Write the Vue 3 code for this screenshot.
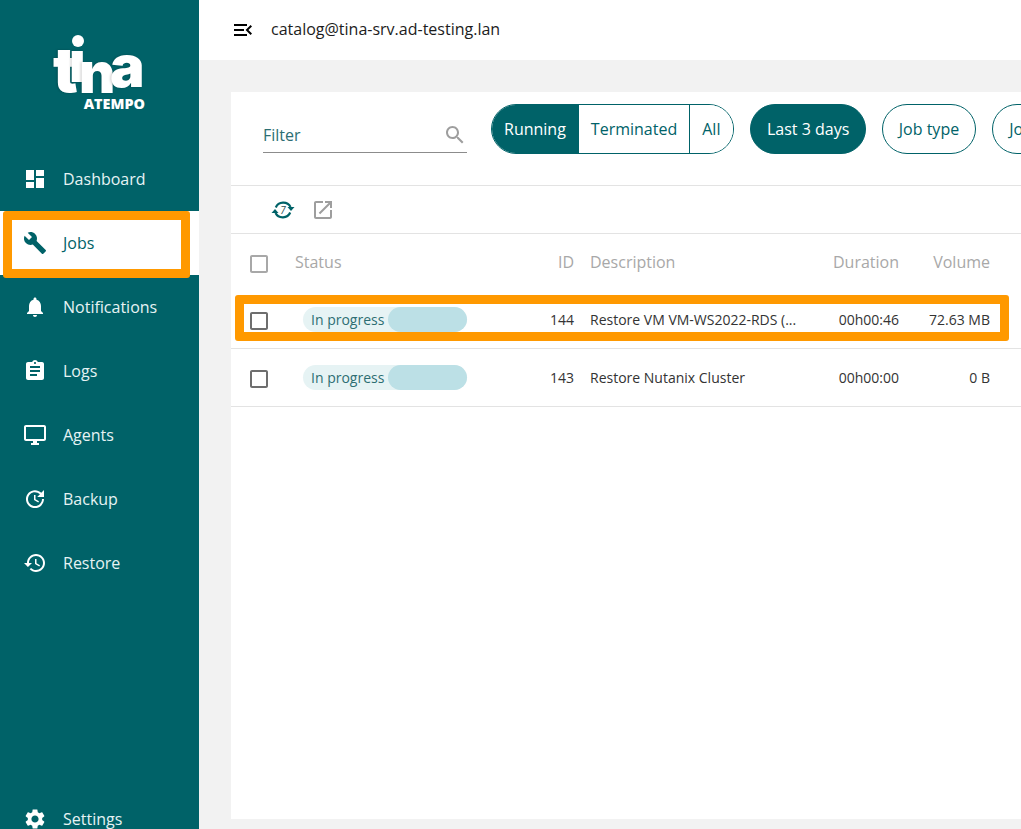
<template>
  <div class="page">
    <aside class="sidebar">
      <div class="logo">
        <svg width="110" height="85" viewBox="0 0 110 85">
          <text class="logo-letter" x="8" y="62" font-size="62">t</text>
          <circle cx="33" cy="11" r="6" fill="#fff" />
          <text class="logo-letter" x="24" y="52" font-size="56">ı</text>
          <text class="logo-letter" x="34" y="63" font-size="56">n</text>
          <text class="logo-letter" x="65" y="57" font-size="58">a</text>
          <text class="logo-sub" x="100" y="79">ATEMPO</text>
        </svg>
      </div>
      <nav class="nav">
        <a v-for="item in navItems" :key="item.label" :class="['nav-item', { active: item.active }]">
          <svg class="nav-icon" viewBox="0 0 24 24"><path :d="item.icon" /></svg>
          <span>{{ item.label }}</span>
        </a>
        <a class="nav-item settings">
          <svg class="nav-icon" viewBox="0 0 24 24"><path :d="settingsIcon" /></svg>
          <span>Settings</span>
        </a>
      </nav>
    </aside>

    <div class="main">
      <header class="topbar">
        <svg class="menu-icon" viewBox="0 0 24 24"><path d="M3 18h13v-2H3v2zm0-5h10v-2H3v2zm0-7v2h13V6H3zm18 9.59L17.42 12 21 8.41 19.59 7l-5 5 5 5L21 15.59z" /></svg>
        <span class="user">catalog@tina-srv.ad-testing.lan</span>
      </header>

      <section class="card">
        <div class="filters">
          <label class="filter-input">
            <span>Filter</span>
            <svg class="search-icon" viewBox="0 0 24 24"><path d="M15.5 14h-.79l-.28-.27C15.41 12.59 16 11.11 16 9.5 16 5.91 13.09 3 9.5 3S3 5.91 3 9.5 5.91 16 9.5 16c1.61 0 3.09-.59 4.23-1.57l.27.28v.79l5 4.99L20.49 19l-4.99-5zm-6 0C7.01 14 5 11.99 5 9.5S7.01 5 9.5 5 14 7.01 14 9.5 11.99 14 9.5 14z" /></svg>
          </label>
          <div class="segmented">
            <button class="seg on">Running</button>
            <button class="seg">Terminated</button>
            <button class="seg">All</button>
          </div>
          <button class="chip on">Last 3 days</button>
          <button class="chip">Job type</button>
          <button class="chip">Job name</button>
        </div>

        <div class="actions">
          <span class="sync">
            <svg viewBox="0 0 24 24">
              <path class="sync-arc" d="M4.800 9.500A8 7.500 0 0 1 19.500 9" />
              <path class="sync-arc" d="M19.200 14.500A8 7.500 0 0 1 4.500 15" />
              <path d="M23.500 9h-7l3.500 4zM.5 15h7L4 11z" />
            </svg>
            <em>7</em>
          </span>
          <svg class="launch" viewBox="0 0 24 24"><path d="M19 19H5V5h7V3H5c-1.11 0-2 .9-2 2v14c0 1.1.89 2 2 2h14c1.1 0 2-.9 2-2v-7h-2v7zM14 3v2h3.59l-9.83 9.83 1.41 1.41L19 6.41V10h2V3h-7z" /></svg>
        </div>

        <div class="row head">
          <svg class="check" viewBox="0 0 24 24"><path :d="checkIcon" /></svg>
          <span class="c-status">Status</span>
          <span class="c-id">ID</span>
          <span class="c-desc">Description</span>
          <span class="c-dur">Duration</span>
          <span class="c-vol">Volume</span>
        </div>
        <div v-for="job in jobs" :key="job.id" class="row">
          <svg class="check dark" viewBox="0 0 24 24"><path :d="checkIcon" /></svg>
          <span class="c-status">
            <span class="progress">
              <span class="progress-label">In progress</span>
              <span class="progress-bar"></span>
            </span>
          </span>
          <span class="c-id">{{ job.id }}</span>
          <span class="c-desc">{{ job.description }}</span>
          <span class="c-dur">{{ job.duration }}</span>
          <span class="c-vol">{{ job.volume }}</span>
        </div>
      </section>
    </div>

    <div class="mark mark-jobs"></div>
    <div class="mark mark-row"></div>
  </div>
</template>

<script setup>
const navItems = [
  { label: 'Dashboard', icon: 'M3 13h8V3H3v10zm0 8h8v-6H3v6zm10 0h8V11h-8v10zm0-18v6h8V3h-8z' },
  { label: 'Jobs', active: true, icon: 'M22.7 19l-9.1-9.1c.9-2.3.4-5-1.500-6.900-2-2-5-2.400-7.400-1.300L9 6 6 9 1.600 4.700C.4 7.100.9 10.100 2.900 12.100c1.900 1.900 4.600 2.400 6.900 1.500l9.100 9.100c.4.4 1 .4 1.400 0l2.300-2.300c.5-.4.5-1.100.1-1.400z' },
  { label: 'Notifications', icon: 'M12 22c1.100 0 2-.9 2-2h-4c0 1.100.89 2 2 2zm6-6v-5c0-3.070-1.640-5.640-4.500-6.320V4c0-.83-.67-1.500-1.500-1.500s-1.500.67-1.500 1.500v.68C7.630 5.360 6 7.920 6 11v5l-2 2v1h16v-1l-2-2z' },
  { label: 'Logs', icon: 'M19 3h-4.180C14.400 1.840 13.300 1 12 1c-1.300 0-2.400.84-2.820 2H5c-1.100 0-2 .9-2 2v14c0 1.100.9 2 2 2h14c1.100 0 2-.9 2-2V5c0-1.100-.9-2-2-2zm-7 0c.55 0 1 .45 1 1s-.45 1-1 1-1-.45-1-1 .45-1 1-1zm2 14H7v-2h7v2zm3-4H7v-2h10v2zm0-4H7V7h10v2z' },
  { label: 'Agents', icon: 'M21 2H3c-1.100 0-2 .9-2 2v12c0 1.100.9 2 2 2h7v2H8v2h8v-2h-2v-2h7c1.100 0 2-.9 2-2V4c0-1.100-.9-2-2-2zm0 14H3V4h18v12z' },
  { label: 'Backup', icon: 'M21 10.120h-6.780l2.740-2.820c-2.730-2.700-7.150-2.800-9.880-.1-2.730 2.710-2.730 7.080 0 9.790s7.150 2.710 9.880 0C18.320 15.650 19 14.080 19 12.100h2c0 1.980-.88 4.550-2.640 6.290-3.510 3.480-9.210 3.480-12.720 0-3.500-3.470-3.530-9.110-.02-12.580s9.140-3.470 12.650 0L21 3v7.120zM12.500 8v4.250l3.500 2.080-.72 1.210L11 13V8h1.500z' },
  { label: 'Restore', icon: 'M13 3c-4.970 0-9 4.030-9 9H1l3.890 3.890.07.14L9 12H6c0-3.870 3.130-7 7-7s7 3.130 7 7-3.130 7-7 7c-1.930 0-3.680-.79-4.940-2.060l-1.420 1.420C8.270 19.990 10.510 21 13 21c4.970 0 9-4.030 9-9s-4.030-9-9-9zm-1 5v5l4.280 2.540.72-1.210-3.500-2.080V8H12z' },
]
const settingsIcon = 'M19.140 12.940c.04-.3.06-.61.06-.94 0-.32-.02-.64-.07-.94l2.030-1.580c.18-.14.23-.41.12-.61l-1.920-3.320c-.12-.22-.37-.29-.59-.22l-2.390.96c-.5-.38-1.030-.7-1.620-.94l-.36-2.540c-.04-.24-.24-.41-.48-.41h-3.840c-.24 0-.43.17-.47.41l-.36 2.540c-.59.24-1.130.57-1.620.94l-2.390-.96c-.22-.08-.47 0-.59.22L2.740 8.870c-.12.21-.08.47.12.61l2.030 1.580c-.05.3-.09.63-.09.94s.02.64.07.94l-2.030 1.580c-.18.14-.23.41-.12.61l1.920 3.320c.12.22.37.29.59.22l2.390-.96c.5.38 1.030.7 1.620.94l.36 2.540c.05.24.24.41.48.41h3.840c.24 0 .44-.17.47-.41l.36-2.540c.59-.24 1.130-.56 1.620-.94l2.390.96c.22.08.47 0 .59-.22l1.920-3.320c.12-.22.07-.47-.12-.61l-2.010-1.580zM12 15.600c-1.980 0-3.600-1.620-3.600-3.600s1.620-3.600 3.600-3.600 3.600 1.620 3.600 3.600-1.620 3.600-3.600 3.600z'
const checkIcon = 'M19 5v14H5V5h14m0-2H5c-1.100 0-2 .9-2 2v14c0 1.100.9 2 2 2h14c1.100 0 2-.9 2-2V5c0-1.100-.9-2-2-2z'

const jobs = [
  { id: 144, description: 'Restore VM VM-WS2022-RDS (...', duration: '00h00:46', volume: '72.63 MB' },
  { id: 143, description: 'Restore Nutanix Cluster', duration: '00h00:00', volume: '0 B' },
]
</script>

<style>
html, body {
  margin: 0;
  height: 100%;
  overflow: hidden;
}
</style>

<style scoped>
.page {
  position: relative;
  display: flex;
  width: 1021px;
  height: 829px;
  overflow: hidden;
  background: #f2f2f2;
  font-family: "Open Sans", "Noto Sans", sans-serif;
}
.sidebar {
  flex: none;
  display: flex;
  flex-direction: column;
  width: 199px;
  height: 851px;
  background: #006268;
}
.logo {
  height: 147px;
  padding: 30px 0 0 45px;
  box-sizing: border-box;
}
.logo svg {
  display: block;
}
.logo-letter {
  font-family: Inter, "Liberation Sans", sans-serif;
  font-weight: 900;
  fill: #fff;
  filter: drop-shadow(-1px 0 1px rgba(0, 0, 0, .2));
}
.logo-sub {
  font-family: "Open Sans", sans-serif;
  font-weight: 800;
  font-size: 14.4px;
  fill: #fff;
  text-anchor: end;
}
.nav {
  flex: 1;
  display: flex;
  flex-direction: column;
}
.nav-item {
  display: flex;
  align-items: center;
  height: 64px;
  padding-left: 23px;
  box-sizing: border-box;
  color: #e6f3f4;
  font-size: 16px;
}
.nav-item.active {
  background: #fff;
  color: #006268;
}
.settings {
  margin-top: auto;
}
.nav-icon {
  flex: none;
  width: 24px;
  height: 24px;
  margin-right: 16px;
  fill: #fff;
}
.active .nav-icon {
  fill: #006268;
}
.main {
  flex: 1;
  min-width: 0;
  display: flex;
  flex-direction: column;
}
.topbar {
  flex: none;
  display: flex;
  align-items: center;
  height: 60px;
  padding-left: 32px;
  background: #fff;
  color: #1c1c1c;
  font-size: 16px;
}
.user {
  margin-bottom: 2px;
}
.menu-icon {
  width: 24px;
  height: 24px;
  margin-right: 16px;
  fill: #000;
}
.card {
  width: 822px;
  height: 727px;
  margin: 32px 0 0 32px;
  background: #fff;
  flex: none;
  overflow: hidden;
}
.filters {
  display: flex;
  align-items: flex-start;
  height: 94px;
  box-sizing: border-box;
  padding: 12px 0 0 32px;
  border-bottom: 1px solid #e3e3e3;
  white-space: nowrap;
}
.filter-input {
  flex: none;
  display: flex;
  align-items: center;
  justify-content: space-between;
  width: 204px;
  height: 34px;
  padding-top: 2px;
  margin: 12px 24px 0 0;
  border-bottom: 1px solid #8c8c8c;
  color: #2d6e73;
  font-size: 16px;
}
.search-icon {
  width: 24px;
  height: 24px;
  fill: #9e9e9e;
}
.segmented {
  flex: none;
  display: flex;
  height: 50px;
  box-sizing: border-box;
  border: 1px solid #006268;
  border-radius: 25px;
  overflow: hidden;
  margin-right: 16px;
}
.seg {
  border: 0;
  border-right: 1px solid #006268;
  background: #fff;
  color: #006268;
  font: 16px "Open Sans", sans-serif;
  padding: 0 12px;
}
.seg:last-child {
  border-right: 0;
  padding-right: 13px;
}
.seg.on {
  background: #006268;
  color: #fff;
}
.chip {
  flex: none;
  height: 50px;
  box-sizing: border-box;
  margin-right: 16px;
  padding: 0 16px;
  border: 1px solid #006268;
  border-radius: 25px;
  background: #fff;
  color: #006268;
  font: 16px "Open Sans", sans-serif;
}
.chip.on {
  padding: 0 15.5px;
  background: #006268;
  color: #fff;
}
.actions {
  display: flex;
  align-items: center;
  gap: 16px;
  height: 47px;
  padding-left: 40px;
  border-bottom: 1px solid #e3e3e3;
}
.sync {
  position: relative;
  width: 24px;
  height: 24px;
}
.sync svg {
  display: block;
  width: 24px;
  height: 24px;
  fill: #006268;
}
.sync-arc {
  fill: none;
  stroke: #006268;
  stroke-width: 2.2;
}
.sync em {
  position: absolute;
  inset: 0;
  text-align: center;
  line-height: 24px;
  font-size: 10px;
  color: #2d4f52;
}
.launch {
  width: 24px;
  height: 24px;
  fill: #9e9e9e;
}
.row {
  display: flex;
  align-items: center;
  height: 57px;
  padding-left: 16px;
  border-bottom: 1px solid #e3e3e3;
  color: #333;
  font-size: 14px;
  white-space: nowrap;
}
.row.head {
  height: 57px;
  border-bottom: 0;
  color: #a8a8a8;
  font-size: 16px;
}
.head span {
  margin-bottom: 2px;
}
.check {
  flex: none;
  width: 24px;
  height: 24px;
  margin-top: 2px;
  fill: #a8a8a8;
}
.check.dark {
  fill: #6e6e6e;
}
.c-status {
  flex: none;
  width: 252px;
  padding-left: 24px;
  box-sizing: border-box;
}
.c-id {
  flex: none;
  width: 51px;
  text-align: right;
}
.c-desc {
  flex: none;
  width: 216px;
  margin-left: 16px;
}
.c-dur {
  flex: none;
  width: 93px;
  text-align: right;
}
.c-vol {
  flex: none;
  width: 91px;
  text-align: right;
}
.progress {
  display: flex;
  align-items: center;
  width: 164px;
  height: 25px;
  margin-left: 8px;
  border-radius: 13px;
  background: #e6f3f4;
  color: #2d6e73;
}
.progress-label {
  padding-left: 8px;
  width: 85px;
  box-sizing: border-box;
}
.progress-bar {
  width: 79px;
  height: 25px;
  border-radius: 13px;
  background: #bce0e6;
}
.mark {
  position: absolute;
  box-sizing: border-box;
  border: 9px solid #ff9900;
  border-radius: 3px;
  pointer-events: none;
}
.mark-jobs {
  left: 3px;
  top: 211px;
  width: 187px;
  height: 67px;
}
.mark-row {
  left: 235px;
  top: 295px;
  width: 774px;
  height: 46px;
}
</style>
